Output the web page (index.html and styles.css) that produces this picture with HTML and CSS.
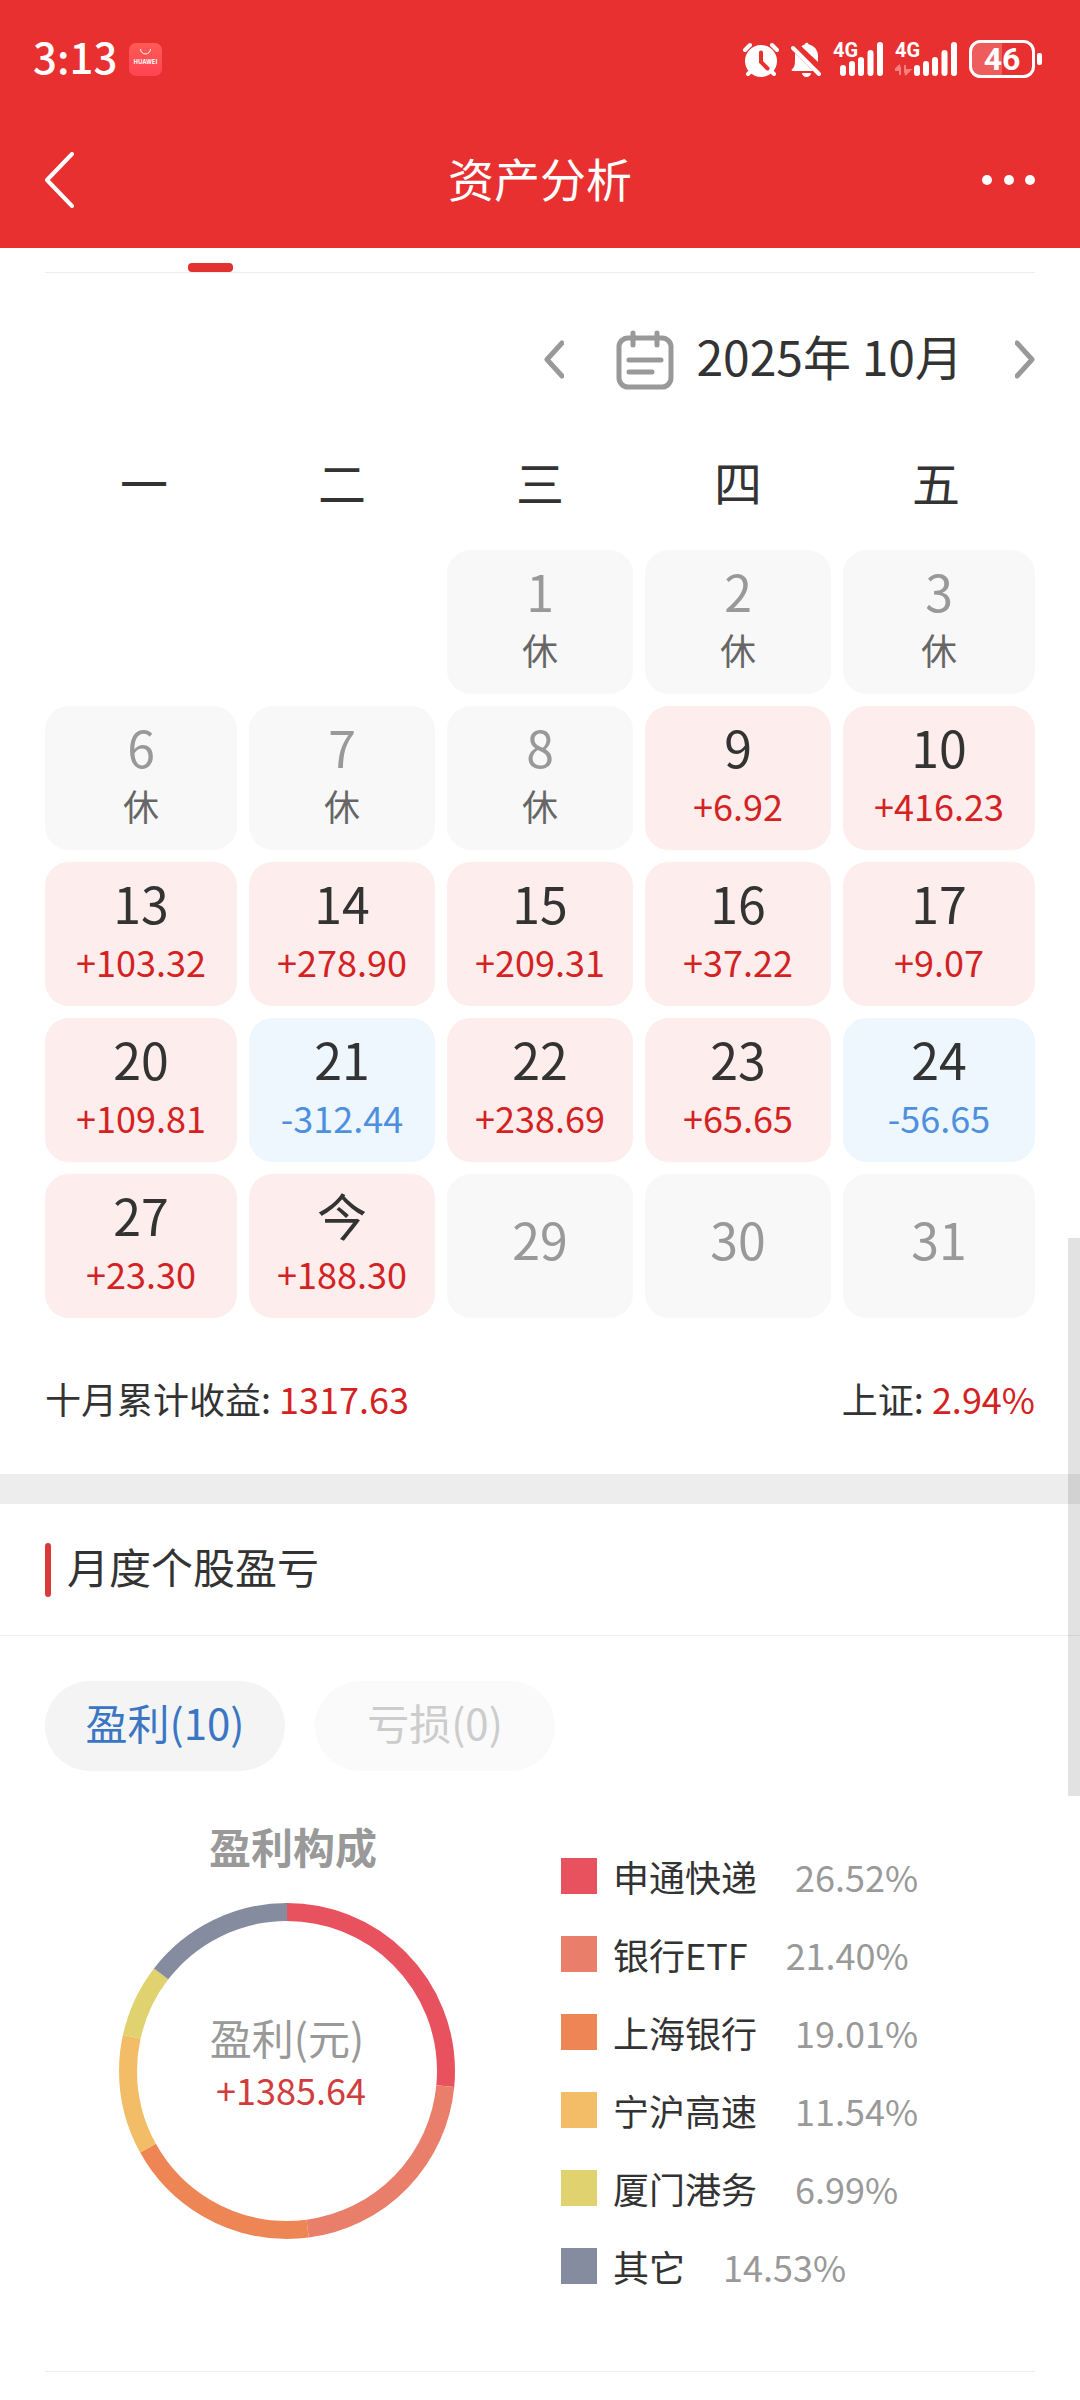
FILE: index.html
```html
<!DOCTYPE html>
<html lang="zh-CN">
<head>
    <meta charset="UTF-8">
    <meta name="viewport" content="width=device-width, initial-scale=1.0">
    <title>资产分析</title>
    <link rel="stylesheet" href="styles.css">
</head>
<body>

    <header class="header">
        <!-- Status bar -->
        <div class="status-bar">
            <div class="status-left">
                <span class="time">3:13</span>
                <svg class="app-icon" width="33" height="33" viewBox="0 0 33 33">
                    <defs>
                        <linearGradient id="appFill" x1="0" y1="0" x2="0" y2="1">
                            <stop offset="0" stop-color="#ff5a55"/>
                            <stop offset="1" stop-color="#ff4453"/>
                        </linearGradient>
                    </defs>
                    <rect width="33" height="33" rx="7" fill="url(#appFill)"/>
                    <path d="M11.500 6a5 5 0 0 0 10 0" fill="none" stroke="#fff" stroke-width="1"/>
                    <text x="16.500" y="21" text-anchor="middle" font-size="6" font-weight="700" fill="#fff">HUAWEI</text>
                </svg>
            </div>
            <div class="status-right">
                <svg width="36" height="35" viewBox="0 0 36 35">
                    <g stroke="#fff" stroke-width="4" stroke-linecap="round" fill="none">
                        <path d="M2 8l5-5M34 8l-5-5M5 32l4-4M31 32l-4-4"/>
                    </g>
                    <circle cx="18" cy="19" r="16" fill="#fff"/>
                    <path d="M18 10.500v9.500l6.500 6.500" fill="none" stroke="#e83030" stroke-width="4" stroke-linecap="round"/>
                </svg>
                <svg width="30" height="35" viewBox="0 0 30 35">
                    <path d="M10.500 4.500C12 3 13 2.500 14 2.200C14.500 .3 17 .3 17.500 2.200C23 3.500 27 8 27 13.500V20Z" fill="#fff"/>
                    <path d="M4 11L22 29H1.500C.5 29 .3 27.500 1.200 27C3.200 25.500 4 23 4 19Z" fill="#fff"/>
                    <path d="M2 6L28 32" stroke="#fff" stroke-width="4" stroke-linecap="round"/>
                    <path d="M11 31h9a4.500 4 0 0 1-9 0z" fill="#fff"/>
                </svg>
                <svg width="50" height="44" viewBox="0 -4 50 44">
                    <text class="net" x="0" y="16">4G</text>
                    <g stroke="#fff" stroke-width="6" stroke-linecap="round">
                        <path d="M10 27v5M19 23v9M28 19v13M37.500 12v20M47 4v28"/>
                    </g>
                </svg>
                <svg width="62" height="44" viewBox="0 -4 62 44">
                    <text class="net" x="0" y="16">4G</text>
                    <path d="M5 34V26M5 24L0 29H5M10 24V32M10 34L15 29H10" fill="#f98080" stroke="#f98080" stroke-width="2"/>
                    <g stroke="#fff" stroke-width="6" stroke-linecap="round">
                        <path d="M22 27v5M31 23v9M40 19v13M49.500 12v20M59 4v28"/>
                    </g>
                </svg>
                <svg width="74" height="38" viewBox="0 0 74 38">
                    <path d="M33 2H12A10 10 0 0 0 2 12V26A10 10 0 0 0 12 36H33Z" fill="#ee5c5c"/>
                    <rect x="1.500" y="1.500" width="63" height="35" rx="10" fill="none" stroke="#fff" stroke-width="3"/>
                    <rect x="68" y="13" width="5" height="12" rx="2" fill="#fff"/>
                    <text class="level" x="33" y="30" text-anchor="middle">46</text>
                </svg>
            </div>
        </div>

        <!-- Title bar -->
        <div class="nav-bar">
            <button class="nav-button" aria-label="返回">
                <svg width="30" height="56" viewBox="0 0 30 56">
                    <path d="M28 2L3 28L28 54" fill="none" stroke="#fff" stroke-width="4" stroke-linecap="round" stroke-linejoin="round"/>
                </svg>
            </button>
            <h1>资产分析</h1>
            <button class="nav-button more" aria-label="更多">
                <svg width="56" height="12" viewBox="0 0 56 12" fill="#fff">
                    <circle cx="7" cy="6" r="5"/>
                    <circle cx="29" cy="6" r="5"/>
                    <circle cx="50" cy="6" r="5"/>
                </svg>
            </button>
        </div>
    </header>

    <main>
        <div class="tab-strip">
            <div class="tab-indicator"></div>
        </div>

        <!-- Calendar -->
        <section class="calendar-section">
            <div class="month-bar">
                <button class="icon-button" aria-label="上个月">
                    <svg width="20" height="64" viewBox="0 0 20 64">
                        <path d="M18 16L3 32.500L18 49" fill="none" stroke="#999" stroke-width="5" stroke-linecap="round" stroke-linejoin="round"/>
                    </svg>
                </button>
                <button class="month-picker">
                    <svg width="58" height="64" viewBox="0 0 58 64" fill="none" stroke="#999" stroke-width="5" stroke-linecap="round">
                        <rect x="3" y="11" width="52" height="49" rx="9"/>
                        <path d="M17 6v12M41 6v12M13 33h32M13 45h23"/>
                    </svg>
                    <span>2025年 10月</span>
                </button>
                <button class="icon-button" aria-label="下个月">
                    <svg width="20" height="64" viewBox="0 0 20 64">
                        <path d="M2 16L17 32.500L2 49" fill="none" stroke="#999" stroke-width="5" stroke-linecap="round" stroke-linejoin="round"/>
                    </svg>
                </button>
            </div>

            <table class="calendar">
                <thead>
                    <tr><th>一</th><th>二</th><th>三</th><th>四</th><th>五</th></tr>
                </thead>
                <tbody>
                    <tr>
                        <td></td>
                        <td></td>
                        <td><div class="day rest"><b>1</b><span>休</span></div></td>
                        <td><div class="day rest"><b>2</b><span>休</span></div></td>
                        <td><div class="day rest"><b>3</b><span>休</span></div></td>
                    </tr>
                    <tr>
                        <td><div class="day rest"><b>6</b><span>休</span></div></td>
                        <td><div class="day rest"><b>7</b><span>休</span></div></td>
                        <td><div class="day rest"><b>8</b><span>休</span></div></td>
                        <td><div class="day gain"><b>9</b><span>+6.92</span></div></td>
                        <td><div class="day gain"><b>10</b><span>+416.23</span></div></td>
                    </tr>
                    <tr>
                        <td><div class="day gain"><b>13</b><span>+103.32</span></div></td>
                        <td><div class="day gain"><b>14</b><span>+278.90</span></div></td>
                        <td><div class="day gain"><b>15</b><span>+209.31</span></div></td>
                        <td><div class="day gain"><b>16</b><span>+37.22</span></div></td>
                        <td><div class="day gain"><b>17</b><span>+9.07</span></div></td>
                    </tr>
                    <tr>
                        <td><div class="day gain"><b>20</b><span>+109.81</span></div></td>
                        <td><div class="day loss"><b>21</b><span>-312.44</span></div></td>
                        <td><div class="day gain"><b>22</b><span>+238.69</span></div></td>
                        <td><div class="day gain"><b>23</b><span>+65.65</span></div></td>
                        <td><div class="day loss"><b>24</b><span>-56.65</span></div></td>
                    </tr>
                    <tr>
                        <td><div class="day gain"><b>27</b><span>+23.30</span></div></td>
                        <td><div class="day gain"><b>今</b><span>+188.30</span></div></td>
                        <td><div class="day future"><b>29</b></div></td>
                        <td><div class="day future"><b>30</b></div></td>
                        <td><div class="day future"><b>31</b></div></td>
                    </tr>
                </tbody>
            </table>

            <div class="summary">
                <p>十月累计收益: <span class="red">1317.63</span></p>
                <p>上证: <span class="red">2.94%</span></p>
            </div>
        </section>

        <!-- Monthly profit and loss by stock -->
        <section class="stocks-section">
            <h2>月度个股盈亏</h2>
            <div class="pills">
                <button class="pill active">盈利(10)</button>
                <button class="pill" disabled>亏损(0)</button>
            </div>

            <div class="composition">
                <div class="chart">
                    <h3>盈利构成</h3>
                    <div class="donut">
                        <svg width="336" height="336" viewBox="0 0 336 336">
                            <g fill="none" stroke-width="18" transform="rotate(-90 168 168)">
                                <circle cx="168" cy="168" r="159" pathLength="100" stroke="#e8525f" stroke-dasharray="26.52 100"/>
                                <circle cx="168" cy="168" r="159" pathLength="100" stroke="#e97e6b" stroke-dasharray="21.40 100" stroke-dashoffset="-26.52"/>
                                <circle cx="168" cy="168" r="159" pathLength="100" stroke="#ed8554" stroke-dasharray="19.01 100" stroke-dashoffset="-47.92"/>
                                <circle cx="168" cy="168" r="159" pathLength="100" stroke="#f3bd67" stroke-dasharray="11.54 100" stroke-dashoffset="-66.93"/>
                                <circle cx="168" cy="168" r="159" pathLength="100" stroke="#dfd26f" stroke-dasharray="6.99 100" stroke-dashoffset="-78.47"/>
                                <circle cx="168" cy="168" r="159" pathLength="100" stroke="#868c9f" stroke-dasharray="14.54 100" stroke-dashoffset="-85.46"/>
                            </g>
                        </svg>
                        <div class="donut-label">
                            <span class="label-name">盈利(元)</span>
                            <span class="label-value">+1385.64</span>
                        </div>
                    </div>
                </div>

                <ul class="legend">
                    <li><i class="swatch c1"></i>申通快递<span>26.52%</span></li>
                    <li><i class="swatch c2"></i>银行ETF<span>21.40%</span></li>
                    <li><i class="swatch c3"></i>上海银行<span>19.01%</span></li>
                    <li><i class="swatch c4"></i>宁沪高速<span>11.54%</span></li>
                    <li><i class="swatch c5"></i>厦门港务<span>6.99%</span></li>
                    <li><i class="swatch c6"></i>其它<span>14.53%</span></li>
                </ul>
            </div>
        </section>
    </main>

    <div class="scroll-thumb"></div>

</body>
</html>
```

FILE: styles.css
```css
* {
    box-sizing: border-box;
}
body {
    position: relative;
    margin: 0;
    background-color: #fff;
    color: #333;
    font-family: "Noto Sans CJK SC", "Noto Sans", sans-serif;
    font-size: 36px;
}
h1, h2, h3, p, ul {
    margin: 0;
    padding: 0;
    font-weight: normal;
}
button {
    padding: 0;
    border: none;
    background: none;
    color: inherit;
    font: inherit;
    cursor: pointer;
}
svg {
    display: block;
}

/* Header */
.header {
    padding-top: 6px;
    background-color: #e83030;
    color: #fff;
}
.status-bar {
    display: flex;
    align-items: center;
    justify-content: space-between;
    height: 106px;
    padding: 0 37px 0 33px;
}
.status-left, .status-right {
    display: flex;
    align-items: center;
    gap: 12px;
}
.time {
    padding-bottom: 6px;
    font-size: 42px;
    font-weight: 500;
    line-height: 60px;
}
.net {
    font-family: Roboto, sans-serif;
    font-size: 20px;
    font-weight: 700;
    fill: #fff;
}
.level {
    font-family: Roboto, sans-serif;
    font-size: 32px;
    font-weight: 700;
    fill: #fff;
}
.nav-bar {
    display: grid;
    grid-template-columns: 1fr auto 1fr;
    align-items: center;
    height: 136px;
    padding: 0 44px;
}
.nav-bar h1 {
    padding-bottom: 6px;
    font-size: 46px;
    line-height: 60px;
}
.nav-button {
    justify-self: start;
}
.nav-button.more {
    justify-self: end;
}

/* Tab strip */
.tab-strip {
    margin: 0 45px;
    padding: 15px 0 0 143px;
    border-bottom: 1px solid #ededed;
}
.tab-indicator {
    width: 45px;
    height: 9px;
    border-radius: 4px;
    background-color: #e33030;
}

/* Calendar */
.calendar-section {
    padding: 46px 45px 0;
}
.month-bar {
    display: flex;
    align-items: flex-end;
    justify-content: flex-end;
    gap: 52px;
    height: 72px;
    margin-bottom: 54px;
}
.month-picker {
    display: flex;
    align-items: flex-end;
    gap: 22px;
    font-size: 48px;
    line-height: 72px;
}
.calendar {
    width: 100%;
    table-layout: fixed;
    border-collapse: collapse;
}
.calendar th {
    padding: 0 0 33px;
    font-size: 48px;
    font-weight: normal;
    line-height: 72px;
}
.calendar td {
    padding: 0 6px 12px;
}
.calendar td:first-child {
    padding-left: 0;
}
.calendar td:last-child {
    padding-right: 0;
}
.day {
    height: 144px;
    padding-top: 10px;
    border-radius: 24px;
    background-color: #f8f8f8;
    text-align: center;
}
.day b {
    display: block;
    font-size: 50px;
    font-weight: normal;
    line-height: 60px;
}
.day span {
    display: block;
    line-height: 58px;
}
.rest b, .future b {
    color: #999;
}
.rest span {
    color: #666;
}
.future b {
    line-height: 108px;
}
.gain {
    background-color: #fdeded;
}
.gain span, .red {
    color: #d42222;
}
.loss {
    background-color: #eef6fe;
}
.loss span {
    color: #4e90de;
}
.summary {
    display: flex;
    justify-content: space-between;
    padding: 38px 0 46px;
    line-height: 60px;
}

/* Stocks */
.stocks-section {
    border-top: 30px solid #ededed;
}
.stocks-section h2 {
    display: flex;
    gap: 16px;
    padding: 39px 45px 38px;
    border-bottom: 1px solid #ededed;
    font-size: 42px;
    line-height: 46px;
}
.stocks-section h2::before {
    content: "";
    width: 6px;
    height: 54px;
    border-radius: 3px;
    background-color: #d93a3a;
}
.pills {
    display: flex;
    gap: 30px;
    padding: 45px 45px 0;
}
.pill {
    width: 240px;
    height: 90px;
    padding-bottom: 10px;
    border-radius: 45px;
    background-color: #fafafa;
    color: #ccc;
    font-size: 42px;
}
.pill.active {
    background-color: #f4f4f4;
    color: #3a76c4;
}
.composition {
    display: grid;
    grid-template-columns: 484fr 474fr;
    gap: 32px;
    margin: 0 45px;
    padding: 45px 0 66px;
    border-bottom: 1px solid #ededed;
}
.chart h3 {
    margin-bottom: 27px;
    padding-left: 12px;
    color: #999;
    font-size: 42px;
    font-weight: 700;
    line-height: 60px;
    text-align: center;
}
.donut {
    position: relative;
    display: flex;
    justify-content: center;
}
.donut-label {
    position: absolute;
    top: 108px;
    left: 0;
    right: 0;
    text-align: center;
    line-height: 52px;
}
.donut-label span {
    display: block;
}
.label-name {
    color: #999;
    font-size: 42px;
}
.label-value {
    padding-left: 8px;
    color: #d13c3c;
}
.legend {
    padding-top: 21px;
    list-style: none;
}
.legend li {
    display: flex;
    align-items: center;
    height: 78px;
    line-height: 74px;
}
.legend span {
    margin-left: 38px;
    color: #999;
}
.swatch {
    width: 36px;
    height: 36px;
    margin-right: 16px;
}
.c1 { background-color: #e8525f; }
.c2 { background-color: #e97e6b; }
.c3 { background-color: #ed8554; }
.c4 { background-color: #f3bd67; }
.c5 { background-color: #dfd26f; }
.c6 { background-color: #868c9f; }

.scroll-thumb {
    position: absolute;
    top: 1238px;
    right: 0;
    width: 12px;
    height: 558px;
    background-color: rgba(0, 0, 0, 0.115);
}
```
